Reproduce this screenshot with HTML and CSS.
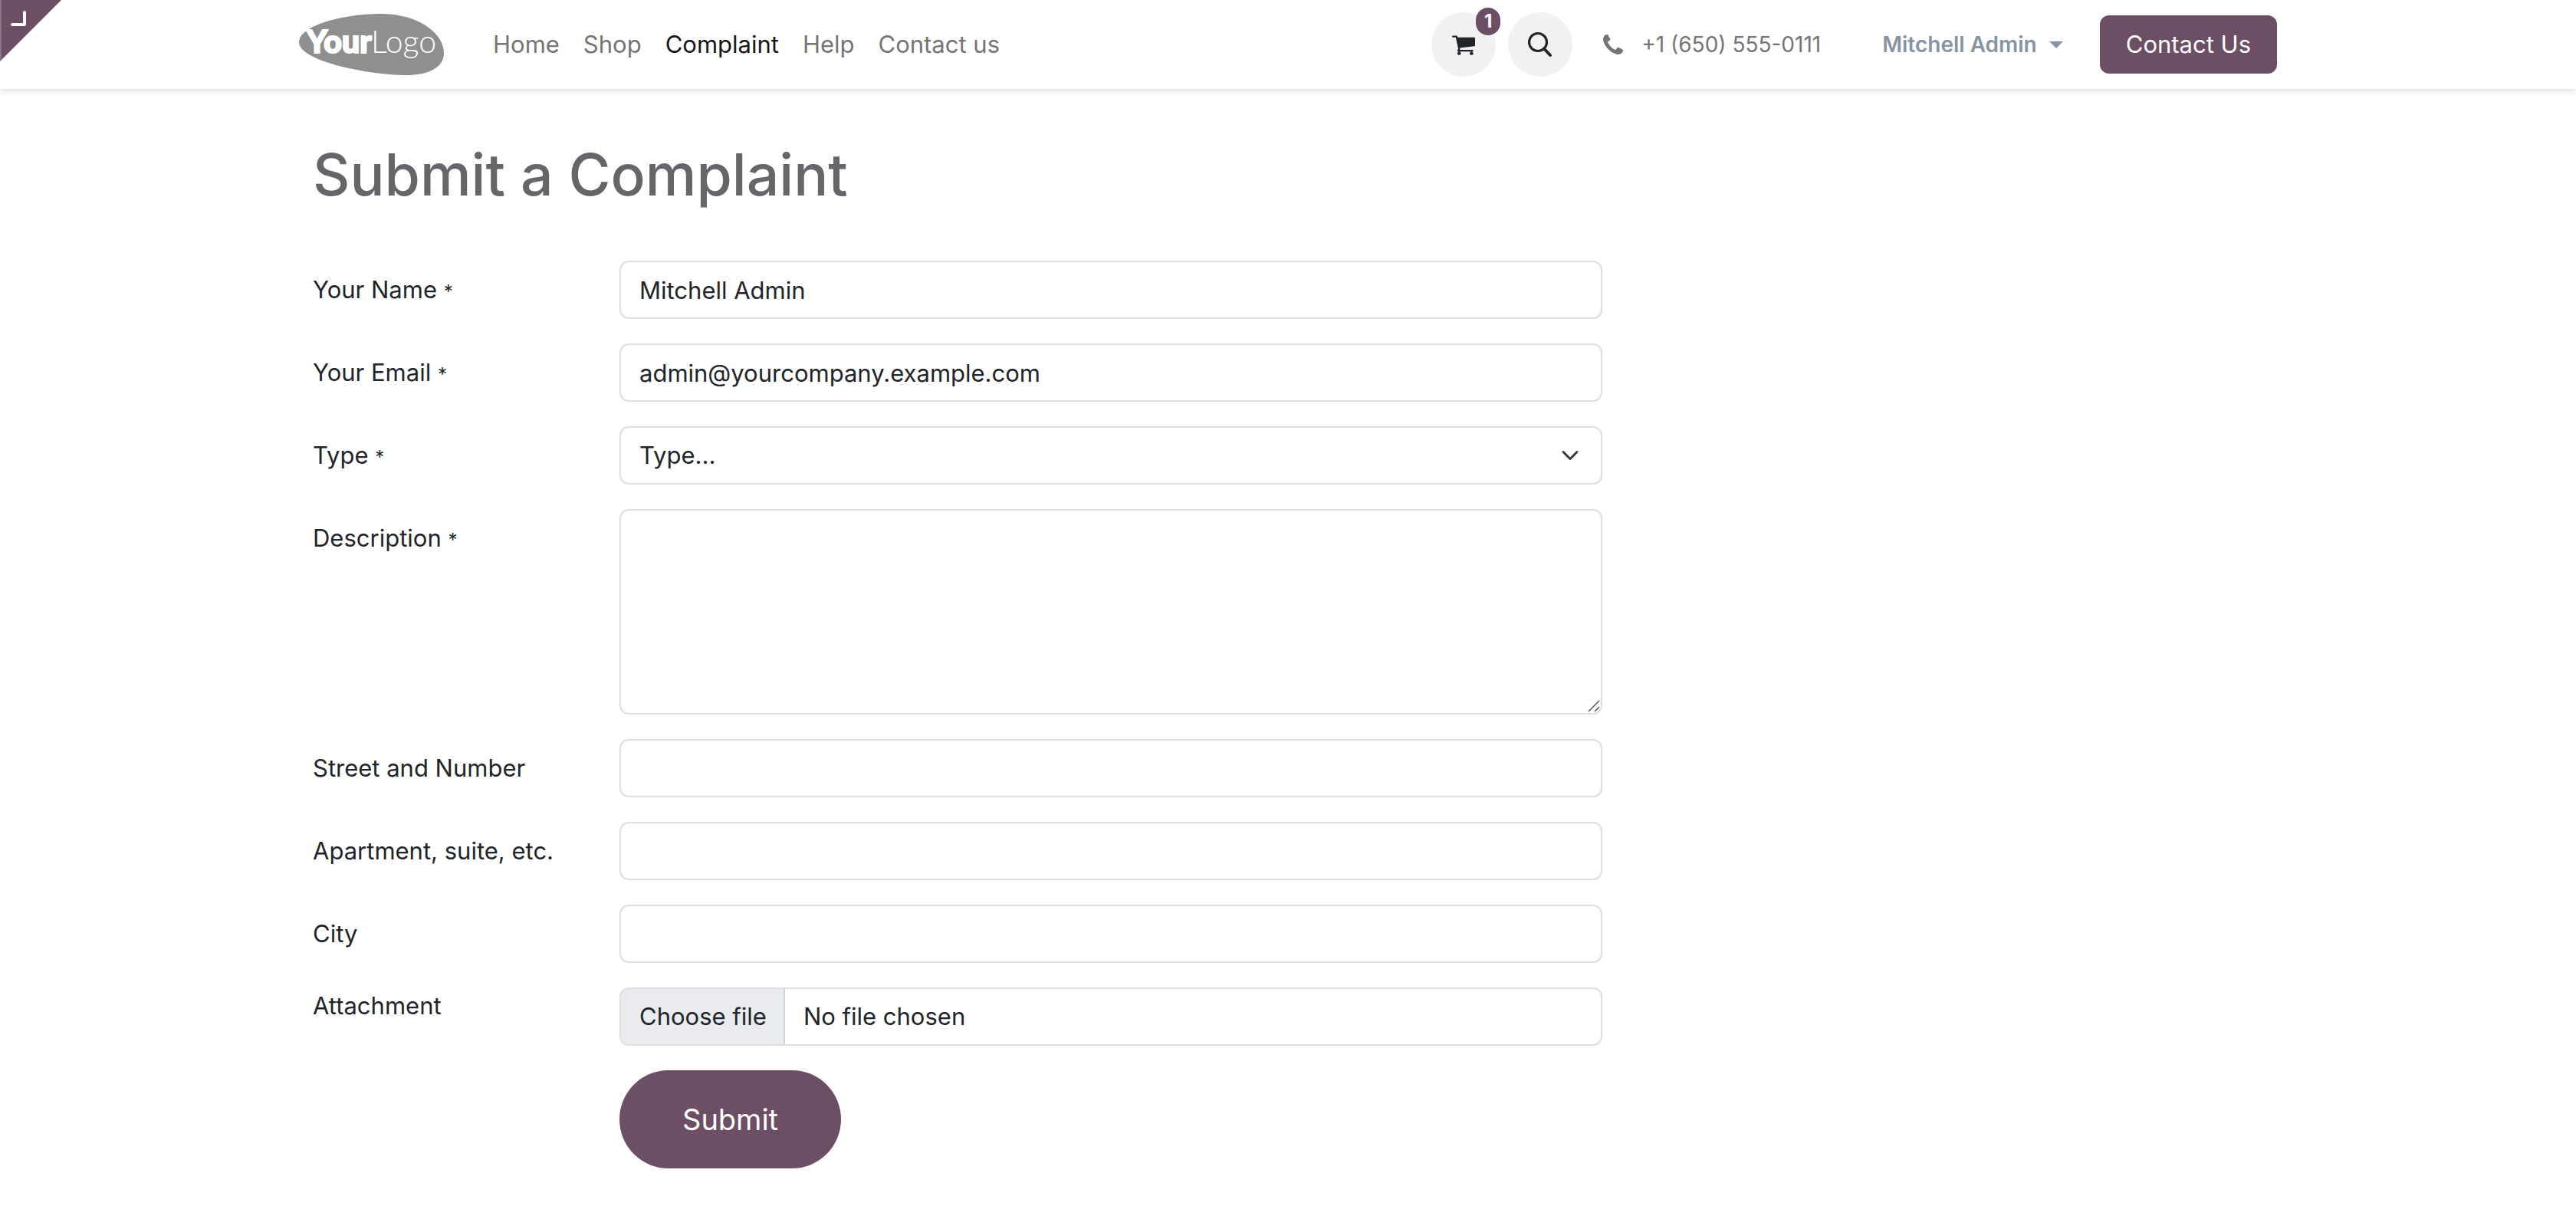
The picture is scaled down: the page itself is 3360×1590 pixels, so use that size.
FILE: index.html
```html
<!DOCTYPE html>
<html lang="en">
<head>
<meta charset="utf-8">
<meta name="viewport" content="width=device-width, initial-scale=1">
<title>Complaint | YourLogo</title>
<link rel="stylesheet" href="styles.css">
</head>
<body>
<button class="editor-corner" type="button" aria-label="Open backend">
  <svg class="editor-corner-icon" viewBox="0 0 80 80" aria-hidden="true">
    <path d="M0 0H80L0 80Z" fill="#6c4e65"/>
    <path d="M0 0H2V78L0 80Z" fill="#8b7286"/>
    <path d="M16 32H32V16" fill="none" stroke="#fff" stroke-width="4" stroke-linecap="round" stroke-linejoin="round"/>
  </svg>
</button>
<header class="site-header">
  <div class="container header-row">
    <a class="logo" href="#" aria-label="YourLogo">
      <svg class="logo-mark" viewBox="0 0 189 80">
        <path d="M0 37C0 15 58 0 107 0C154 0 189 24 189 52C189 70 168 80 140 80C92 80 0 62 0 37Z" fill="#8f8f8f"/>
        <path d="M8 20H16L13 25Z" fill="#8f8f8f"/>
        <text class="logo-your" x="10" y="51">Your</text>
        <text class="logo-word" x="94" y="51">Logo</text>
      </svg>
    </a>
    <nav class="main-nav">
      <a href="#">Home</a>
      <a href="#">Shop</a>
      <a class="active" href="#">Complaint</a>
      <a href="#">Help</a>
      <a href="#">Contact us</a>
    </nav>
    <div class="tools">
      <a class="round-button" href="#" aria-label="Cart">
        <svg class="icon-cart" viewBox="0 0 1664 1536" aria-hidden="true"><path d="M640 1408q0 52-38 90t-90 38-90-38-38-90 38-90 90-38 90 38 38 90zm896 0q0 52-38 90t-90 38-90-38-38-90 38-90 90-38 90 38 38 90zm128-1088v512q0 24-16.500 42.500t-40.500 21.500l-1044 122q13 60 13 70 0 16-24 64h920q26 0 45 19t19 45-19 45-45 19H448q-26 0-45-19t-19-45q0-11 8-31.500t16-36 21.500-40 15.500-29.500L268 256H64q-26 0-45-19T0 192t19-45 45-19h256q16 0 28.500 6.500T368 150t13 24.500 8 26 5.500 29.500 4.500 26h1201q26 0 45 19t19 45z" fill="currentColor"/></svg>
        <span class="badge">1</span>
      </a>
      <button class="round-button" type="button" aria-label="Search">
        <svg class="icon-search" viewBox="0 0 32 36" aria-hidden="true"><circle cx="13" cy="15" r="11.500" fill="none" stroke="currentColor" stroke-width="3.200"/><path d="M21 23.500L29 32" stroke="currentColor" stroke-width="4" stroke-linecap="round"/></svg>
      </button>
    </div>
    <a class="phone" href="tel:+16505550111">
      <svg class="icon-phone" viewBox="0 0 1408 1408" aria-hidden="true"><path d="M1408 1112q0 27-10 70.500t-21 68.500q-21 50-122 106-94 51-186 51-27 0-53-3.500t-57.500-12.500-47-14.500T856 1357t-49-18q-98-35-175-83-127-79-264-216T152 776q-48-77-83-175-3-9-18-49t-20.500-55.500-14.500-47T3.500 392 0 339q0-92 51-186Q107 52 157 31q25-11 68.500-21T296 0q14 0 21 3 18 6 53 76 11 19 30 54t35 63.500 31 53.500q3 4 17.500 25t21.500 35.500 7 28.500q0 20-28.500 50t-62 55-62 53-28.500 46q0 9 5 22.500t8.500 20.500 14 24 11.500 19q76 137 174 235t235 174q2 1 19 11.500t24 14 20.500 8.500 22.500 5q18 0 46-28.500t53-62 55-62 50-28.500q14 0 28.500 7t35.500 21.500 25 17.500q25 15 53.500 31t63.500 35 54 30q70 35 76 53 3 7 3 21z" fill="currentColor"/></svg>
      <span>+1 (650) 555-0111</span>
    </a>
    <button class="user-menu" type="button">Mitchell Admin</button>
    <a class="contact-button" href="#">Contact Us</a>
  </div>
</header>
<main class="container page">
  <h1>Submit a Complaint</h1>
  <form class="complaint-form">
    <div class="field">
      <label for="name">Your Name <span class="mark">*</span></label>
      <input class="control" id="name" type="text" value="Mitchell Admin">
    </div>
    <div class="field">
      <label for="email">Your Email <span class="mark">*</span></label>
      <input class="control" id="email" type="email" value="admin@yourcompany.example.com">
    </div>
    <div class="field">
      <label for="type">Type <span class="mark">*</span></label>
      <select class="control select" id="type"><option>Type...</option></select>
    </div>
    <div class="field">
      <label for="description">Description <span class="mark">*</span></label>
      <textarea class="control textarea" id="description"></textarea>
    </div>
    <div class="field">
      <label for="street">Street and Number</label>
      <input class="control" id="street" type="text">
    </div>
    <div class="field">
      <label for="apartment">Apartment, suite, etc.</label>
      <input class="control" id="apartment" type="text">
    </div>
    <div class="field">
      <label for="city">City</label>
      <input class="control" id="city" type="text">
    </div>
    <div class="field">
      <label class="label-top" for="attachment">Attachment</label>
      <div class="control file">
        <span class="file-button">Choose file</span>
        <span class="file-name">No file chosen</span>
        <input class="file-input" id="attachment" type="file">
      </div>
    </div>
    <div class="field">
      <button class="submit" type="submit">Submit</button>
    </div>
  </form>
</main>
</body>
</html>
```
FILE: styles.css
```css
:root {
  --primary: #6c4e65;
  --text: #212529;
  --muted: #757575;
  --line: #dedede;
}

* {
  box-sizing: border-box;
}

body {
  margin: 0;
  background: #fff;
  color: var(--text);
  font-family: Inter, "Liberation Sans", sans-serif;
  font-size: 31px;
  line-height: 48px;
}

button,
input,
select,
textarea {
  font: inherit;
  color: inherit;
}

a {
  color: inherit;
  text-decoration: none;
}

.container {
  width: 100%;
  max-width: 2640px;
  margin: 0 auto;
}

.editor-corner {
  position: absolute;
  top: 0;
  left: 0;
  padding: 0;
  border: 0;
  background: none;
}

.editor-corner-icon {
  display: block;
  width: 80px;
  height: 80px;
}

.site-header {
  background: #fff;
  box-shadow: 0 2px 8px rgba(0, 0, 0, 0.15);
}

.header-row {
  display: flex;
  align-items: center;
  min-height: 116px;
  padding: 0 30px;
}

.logo-mark {
  display: block;
  width: 189px;
  height: 80px;
  overflow: visible;
}

.logo-your,
.logo-word {
  fill: #fff;
  font-family: Lato, sans-serif;
  font-size: 41px;
}

.logo-your {
  font-weight: 900;
  stroke: #fff;
  stroke-width: 2px;
}

.logo-word {
  font-weight: 300;
}

.main-nav {
  display: flex;
  gap: 31px;
  margin-left: 64px;
  color: var(--muted);
}

.main-nav .active {
  color: #161616;
}

.tools {
  display: flex;
  gap: 16px;
  margin-left: auto;
}

.round-button {
  position: relative;
  display: grid;
  place-items: center;
  width: 84px;
  height: 84px;
  padding: 0;
  border: 0;
  border-radius: 50%;
  background: #f1f1f1;
}

.icon-cart {
  width: 30px;
  height: 28px;
}

.icon-search {
  width: 32px;
  height: 36px;
}

.badge {
  position: absolute;
  top: -6px;
  right: -6px;
  width: 32px;
  height: 36px;
  border-radius: 16px;
  background: var(--primary);
  color: #fff;
  font-size: 24px;
  font-weight: 700;
  line-height: 36px;
  text-align: center;
}

.phone {
  display: flex;
  align-items: center;
  gap: 24px;
  margin-left: 40px;
  color: var(--muted);
  font-size: 28px;
}

.icon-phone {
  width: 26px;
  height: 26px;
}

.user-menu {
  display: flex;
  align-items: center;
  gap: 16px;
  margin-left: 80px;
  padding: 0;
  border: 0;
  background: none;
  color: #8794a3;
  font-size: 28px;
  font-weight: 600;
}

.user-menu::after {
  content: "";
  border: 9px solid transparent;
  border-top-color: currentColor;
  border-bottom: 0;
}

.contact-button {
  margin-left: 48px;
  padding: 14px 34px;
  border-radius: 12px;
  background: var(--primary);
  color: #fff;
}

.page {
  padding: 64px 48px;
}

h1 {
  margin: 0 0 64px;
  color: #65666a;
  font-size: 75px;
  font-weight: 500;
  line-height: 96px;
}

.complaint-form {
  display: grid;
  gap: 32px;
  max-width: 1682px;
}

.field {
  display: grid;
  grid-template-columns: 400px 1fr;
  align-items: start;
}

.field label {
  padding-top: 14px;
}

.field .label-top {
  padding-top: 0;
}

.mark {
  font-size: 24px;
  line-height: 24px;
}

.control {
  display: block;
  width: 100%;
  min-width: 0;
  height: 76px;
  padding: 12px 24px;
  border: 2px solid var(--line);
  border-radius: 12px;
  background: #fff;
}

.select {
  appearance: none;
  background: #fff url("data:image/svg+xml,%3Csvg xmlns='http://www.w3.org/2000/svg' viewBox='0 0 16 16'%3E%3Cpath fill='none' stroke='%23343a40' stroke-linecap='round' stroke-linejoin='round' stroke-width='2' d='m2 5 6 6 6-6'/%3E%3C/svg%3E") no-repeat right 24px center / 32px 24px;
}

.textarea {
  height: 268px;
  resize: vertical;
  background: #fff url("data:image/svg+xml,%3Csvg xmlns='http://www.w3.org/2000/svg' viewBox='0 0 16 16'%3E%3Cpath stroke='%23555' stroke-width='1.500' d='M1 15 15 1M9 15l6-6'/%3E%3C/svg%3E") no-repeat right 1px bottom 1px / 16px 16px;
}

.textarea::-webkit-resizer {
  background: transparent;
}

.file {
  position: relative;
  display: flex;
  padding: 0;
  overflow: hidden;
}

.file-button,
.file-name {
  padding: 12px 24px;
}

.file-button {
  padding-right: 22px;
  border-right: 2px solid #ced4da;
  background: #e9ebef;
}

.file-input {
  position: absolute;
  inset: 0;
  width: 100%;
  opacity: 0;
}

.submit {
  grid-column: 2;
  justify-self: start;
  padding: 34px 82px;
  border: 0;
  border-radius: 64px;
  background: var(--primary);
  color: #fff;
  font-size: 38px;
  line-height: 60px;
}
```
